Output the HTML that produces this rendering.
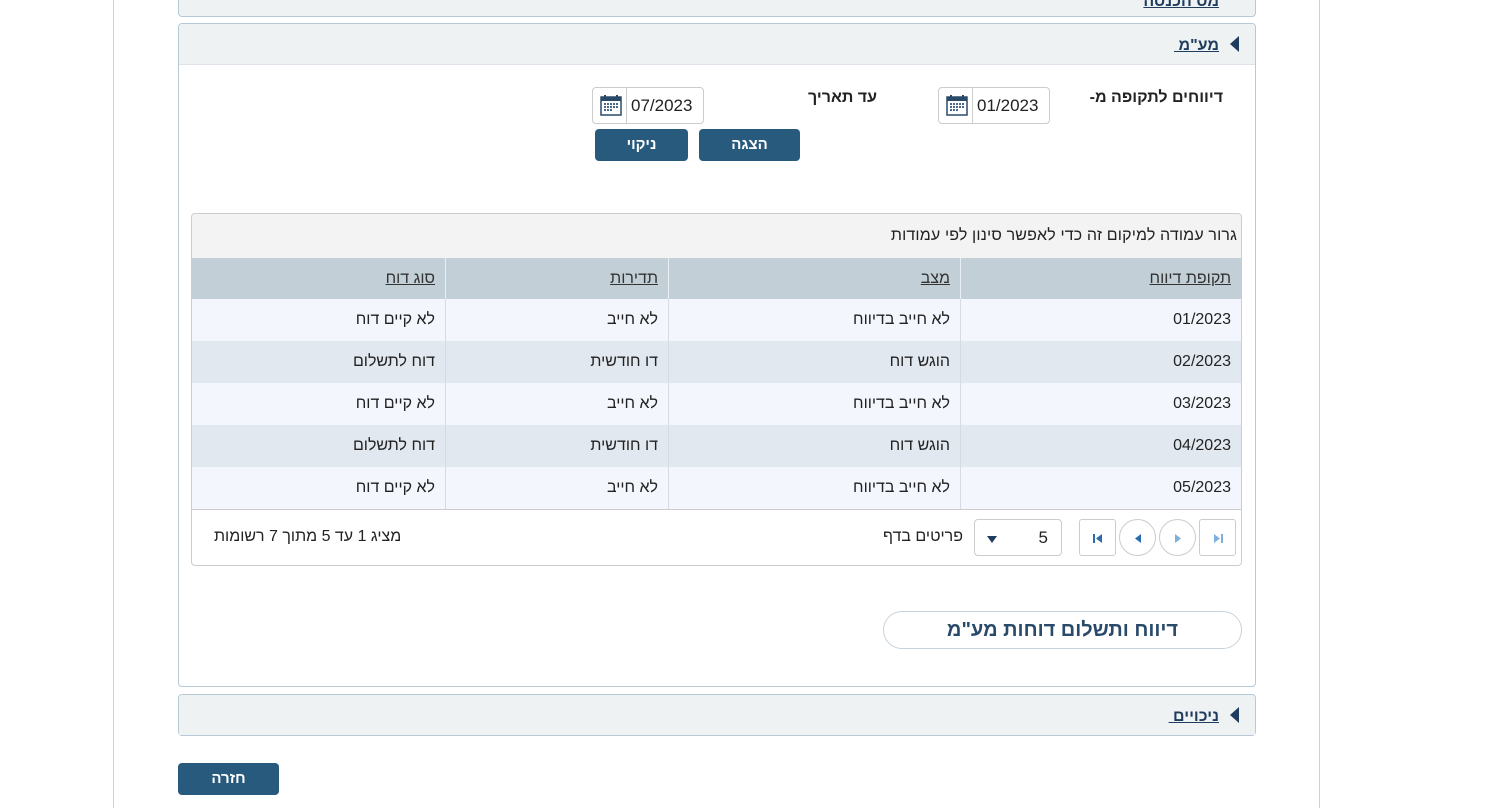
<!DOCTYPE html>
<html><head><meta charset="utf-8"><style>
*{box-sizing:border-box;margin:0;padding:0}
body{width:1494px;height:808px;overflow:hidden;background:#fff;font-family:"Liberation Sans",Arial,sans-serif;font-size:16px;color:#222;position:relative}
.a{position:absolute}
.r{direction:rtl}
.vl{position:absolute;top:0;height:808px;width:1px;background:#d0d0d0}
.panel{position:absolute;left:178px;width:1078px;border:1px solid #b7c9d6;border-radius:4px;background:#fff}
.ph{height:41px;background:#eff2f3;border-radius:4px 4px 0 0;position:relative;border-bottom:1px solid #dde3e8}
.ph .t{position:absolute;right:36px;top:13px;font-weight:bold;color:#1f3c5e;text-decoration:underline;font-size:16px;direction:rtl}
.tri{position:absolute;right:16px;top:12px;width:0;height:0;border-top:8px solid transparent;border-bottom:8px solid transparent;border-right:9px solid #1f3c5e}
.btn{position:absolute;background:#285a7e;color:#fff;font-weight:bold;font-size:15px;border-radius:4px;text-align:center;line-height:32px;height:32px}
.date{position:absolute;width:112px;height:37px;border:1px solid #ccc;border-radius:4px;background:#fff}
.date .ic{position:absolute;left:0;top:0;width:34px;height:35px;border-right:1px solid #ccc}
.date .v{position:absolute;left:38px;top:8px;font-size:17px;color:#222}
.lbl{position:absolute;font-weight:bold;font-size:16px;color:#222;direction:rtl}
.grid{position:absolute;left:191px;top:213px;width:1051px;height:353px;border:1px solid #ccc;border-radius:4px;overflow:hidden}
.row{position:absolute;left:0;width:1049px;height:42px}
.c{position:absolute;top:0;height:100%;font-size:16px;line-height:42px;text-align:right;padding-right:10px;border-left:1px solid #d4dbe2;direction:rtl}
.hd .c{text-decoration:underline;color:#333;border-left:1px solid #e8eef2}
.pb{position:absolute;width:37px;height:37px;border:1px solid #ccc;background:#fff}
.pb svg{position:absolute;left:0;top:0}
</style></head><body>
<div class="vl" style="left:113px"></div>
<div class="vl" style="left:1319px"></div>

<div class="panel" style="top:-25px;height:42px;background:#eff2f3">
 <div class="t" style="position:absolute;right:36px;top:17px;font-weight:bold;color:#1f3c5e;text-decoration:underline">מס הכנסה</div>
</div>

<div class="panel" style="top:23px;height:664px">
 <div class="ph"><div class="tri"></div><div class="t">מע"מ&nbsp;</div></div>
</div>

<svg width="0" height="0" style="position:absolute"><defs><g id="cal"><rect x="8" y="9" width="20" height="18" fill="#fff" stroke="#2a4a6a" stroke-width="1.5"/><rect x="8" y="9" width="20" height="4" fill="#2a4a6a"/><rect x="11" y="7" width="2" height="4" fill="#2a4a6a"/><rect x="23" y="7" width="2" height="4" fill="#2a4a6a"/><g fill="#4a6a8a"><rect x="11" y="15" width="2" height="2"/><rect x="14" y="15" width="2" height="2"/><rect x="17" y="15" width="2" height="2"/><rect x="20" y="15" width="2" height="2"/><rect x="23" y="15" width="2" height="2"/><rect x="11" y="18" width="2" height="2"/><rect x="14" y="18" width="2" height="2"/><rect x="17" y="18" width="2" height="2"/><rect x="20" y="18" width="2" height="2"/><rect x="23" y="18" width="2" height="2"/><rect x="11" y="21" width="2" height="2"/><rect x="14" y="21" width="2" height="2"/><rect x="17" y="21" width="2" height="2"/></g></g></defs></svg>

<div class="lbl" style="right:271px;top:89px">דיווחים לתקופה מ-</div>
<div class="date" style="left:938px;top:87px"><div class="ic"><svg width="34" height="35"><use href="#cal"/></svg></div><div class="v">01/2023</div></div>
<div class="lbl" style="right:617px;top:89px">עד תאריך</div>
<div class="date" style="left:592px;top:87px"><div class="ic"><svg width="34" height="35"><use href="#cal"/></svg></div><div class="v">07/2023</div></div>
<div class="btn" style="left:699px;top:129px;width:101px">הצגה</div>
<div class="btn" style="left:595px;top:129px;width:93px">ניקוי</div>

<div class="grid">
 <div class="a r" style="left:0;top:0;width:1049px;height:44px;background:#f3f3f3;text-align:right;padding-right:4px;line-height:44px;font-size:16px;letter-spacing:0.15px;color:#222">גרור עמודה למיקום זה כדי לאפשר סינון לפי עמודות</div>
 <div class="row hd" style="top:44px;height:41px;background:#c2cfd6">
  <div class="c" style="left:768px;width:281px;line-height:41px;border-left:1px solid #e8eef2">תקופת דיווח</div>
  <div class="c" style="left:476px;width:292px;line-height:41px">מצב</div>
  <div class="c" style="left:253px;width:223px;line-height:41px">תדירות</div>
  <div class="c" style="left:0;width:253px;line-height:41px;border:none">סוג דוח</div>
 </div>
 <div class="row" style="top:85px;background:#f3f7fd"><div class="c" style="left:768px;width:281px">01/2023</div><div class="c" style="left:476px;width:292px">לא חייב בדיווח</div><div class="c" style="left:253px;width:223px">לא חייב</div><div class="c" style="left:0;width:253px;border:none">לא קיים דוח</div></div>
 <div class="row" style="top:127px;background:#e2e8f0"><div class="c" style="left:768px;width:281px">02/2023</div><div class="c" style="left:476px;width:292px">הוגש דוח</div><div class="c" style="left:253px;width:223px">דו חודשית</div><div class="c" style="left:0;width:253px;border:none">דוח לתשלום</div></div>
 <div class="row" style="top:169px;background:#f3f7fd"><div class="c" style="left:768px;width:281px">03/2023</div><div class="c" style="left:476px;width:292px">לא חייב בדיווח</div><div class="c" style="left:253px;width:223px">לא חייב</div><div class="c" style="left:0;width:253px;border:none">לא קיים דוח</div></div>
 <div class="row" style="top:211px;background:#e2e8f0"><div class="c" style="left:768px;width:281px">04/2023</div><div class="c" style="left:476px;width:292px">הוגש דוח</div><div class="c" style="left:253px;width:223px">דו חודשית</div><div class="c" style="left:0;width:253px;border:none">דוח לתשלום</div></div>
 <div class="row" style="top:253px;background:#f3f7fd"><div class="c" style="left:768px;width:281px">05/2023</div><div class="c" style="left:476px;width:292px">לא חייב בדיווח</div><div class="c" style="left:253px;width:223px">לא חייב</div><div class="c" style="left:0;width:253px;border:none">לא קיים דוח</div></div>
 <div class="a" style="left:0;top:295px;width:1049px;height:1px;background:#ccc"></div>
 <div class="pb" style="left:1007px;top:305px;border-radius:3px"><svg width="37" height="37"><path d="M14 14 L20 18.5 L14 23Z" fill="#7fb0dc"/><rect x="21" y="14" width="2" height="9" fill="#7fb0dc"/></svg></div>
 <div class="pb" style="left:967px;top:305px;border-radius:50%"><svg width="37" height="37"><path d="M15 14 L21 18.5 L15 23Z" fill="#7fb0dc"/></svg></div>
 <div class="pb" style="left:927px;top:305px;border-radius:50%"><svg width="37" height="37"><path d="M21 14 L15 18.5 L21 23Z" fill="#2a6ab0"/></svg></div>
 <div class="pb" style="left:887px;top:305px;border-radius:3px"><svg width="37" height="37"><rect x="13" y="14" width="2" height="9" fill="#2a6ab0"/><path d="M22 14 L16 18.5 L22 23Z" fill="#2a6ab0"/></svg></div>
 <div class="a" style="left:782px;top:305px;width:88px;height:37px;border:1px solid #ccc;border-radius:4px;background:#fff"><svg class="a" style="left:11px;top:14px" width="12" height="10"><path d="M1 2 L11 2 L6 9Z" fill="#1f3c5e"/></svg><span class="a" style="right:13px;top:8px;font-size:17px">5</span></div>
 <div class="a r" style="left:691px;top:314px;font-size:16px">פריטים בדף</div>
 <div class="a r" style="left:22px;top:314px;font-size:16px">מציג 1 עד 5 מתוך 7 רשומות</div>
</div>

<div class="a r" style="left:883px;top:611px;width:359px;height:38px;border:1px solid #c9d3dc;border-radius:19px;text-align:center;line-height:36px;font-weight:bold;font-size:20px;color:#2a4a6a">דיווח ותשלום דוחות מע"מ</div>

<div class="panel" style="top:694px;height:42px">
 <div class="ph" style="height:40px;border:none"><div class="tri"></div><div class="t">ניכויים&nbsp;</div></div>
</div>

<div class="btn" style="left:178px;top:763px;width:101px">חזרה</div>
</body></html>
